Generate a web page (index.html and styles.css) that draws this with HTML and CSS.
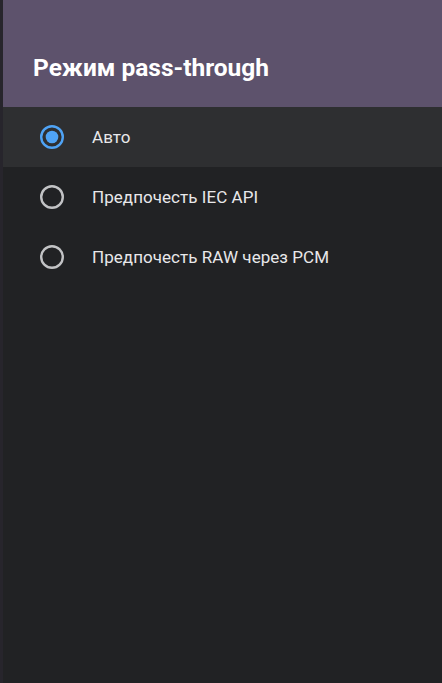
FILE: index.html
```html
<!DOCTYPE html>
<html lang="ru">
<head>
<meta charset="utf-8">
<link rel="stylesheet" href="styles.css">
</head>
<body>
<div class="screen">
  <div class="edge"></div>
  <div class="panel">
    <header class="header"><h1 class="title">Режим pass-through</h1></header>
    <ul class="list">
      <li class="item selected">
        <svg class="radio" width="26" height="26" viewBox="0 0 26 26"><circle cx="13" cy="13" r="10.8" fill="none" stroke="#4fa3f5" stroke-width="2.4"/><circle cx="13" cy="13" r="6.3" fill="#4fa3f5"/></svg>
        <span class="label">Авто</span>
      </li>
      <li class="item">
        <svg class="radio" width="26" height="26" viewBox="0 0 26 26"><circle cx="13" cy="13" r="10.8" fill="none" stroke="#c2c3c5" stroke-width="2.4"/></svg>
        <span class="label">Предпочесть IEC API</span>
      </li>
      <li class="item">
        <svg class="radio" width="26" height="26" viewBox="0 0 26 26"><circle cx="13" cy="13" r="10.8" fill="none" stroke="#c2c3c5" stroke-width="2.4"/></svg>
        <span class="label">Предпочесть RAW через PCM</span>
      </li>
    </ul>
  </div>
</div>
</body>
</html>
```
FILE: styles.css
```css
html, body {
  margin: 0;
  padding: 0;
  background: #212224;
}
.screen {
  display: flex;
  width: 442px;
  height: 683px;
  overflow: hidden;
  font-family: Roboto, "Noto Sans", sans-serif;
}
.edge {
  width: 3px;
  flex: none;
  background: #27252c;
}
.panel {
  flex: 1;
  display: flex;
  flex-direction: column;
  background: #212224;
}
.header {
  height: 107px;
  box-sizing: border-box;
  background: #5d526c;
  padding: 52px 0 0 30px;
}
.title {
  margin: 0;
  color: #ffffff;
  font-size: 24.5px;
  font-weight: 700;
  line-height: 32px;
  letter-spacing: 0;
}
.list {
  list-style: none;
  margin: 0;
  padding: 0;
}
.item {
  height: 60px;
  display: flex;
  align-items: center;
  padding-left: 36px;
}
.item.selected {
  background: #2e2f31;
}
.radio {
  flex: none;
}
.label {
  margin-left: 27px;
  color: #e8e8ea;
  font-size: 17px;
  letter-spacing: 0.05px;
}
```
